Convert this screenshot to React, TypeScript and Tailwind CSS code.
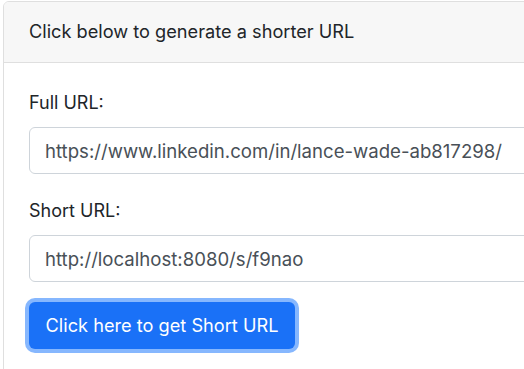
import React from "react";

export default function App() {
  return (
    <div
      className="w-[524px] h-[369px] overflow-hidden bg-white pl-[3px] pt-[1px]"
      style={{ fontFamily: "Inter, 'Liberation Sans', sans-serif" }}
    >
      <div className="w-[600px] h-[420px] border border-[#dfdfdf] rounded-tl-[6px] overflow-hidden">
        <div className="h-[61px] bg-[#f7f7f7] border-b border-[#dfdfdf] pl-[25px] flex items-center text-[18.2px] text-[#212529]">
          Click below to generate a shorter URL
        </div>
        <div className="pl-[25px] pt-[26px] flex flex-col">
          <label className="text-[18px] leading-[27px] text-[#212529]">Full URL:</label>
          <input
            readOnly
            value="https://www.linkedin.com/in/lance-wade-ab817298/"
            className="mt-[11px] h-[47px] w-[540px] border border-[#ced4da] rounded-[6px] px-[15px] text-[18.6px] text-[#495057] outline-none"
          />
          <label className="mt-[23px] text-[18px] leading-[27px] text-[#212529]">Short URL:</label>
          <input
            readOnly
            value="http://localhost:8080/s/f9nao"
            className="mt-[11px] h-[47px] w-[540px] border border-[#ced4da] rounded-[6px] px-[15px] text-[18.6px] text-[#495057] outline-none"
          />
          <div className="mt-[20px]">
            <button className="h-[47px] w-[266px] bg-[#1a71f7] text-white text-[18.2px] rounded-[6px] shadow-[0_0_0_4px_#86b7fe] flex items-center justify-center">
              Click here to get Short URL
            </button>
          </div>
        </div>
      </div>
    </div>
  );
}
